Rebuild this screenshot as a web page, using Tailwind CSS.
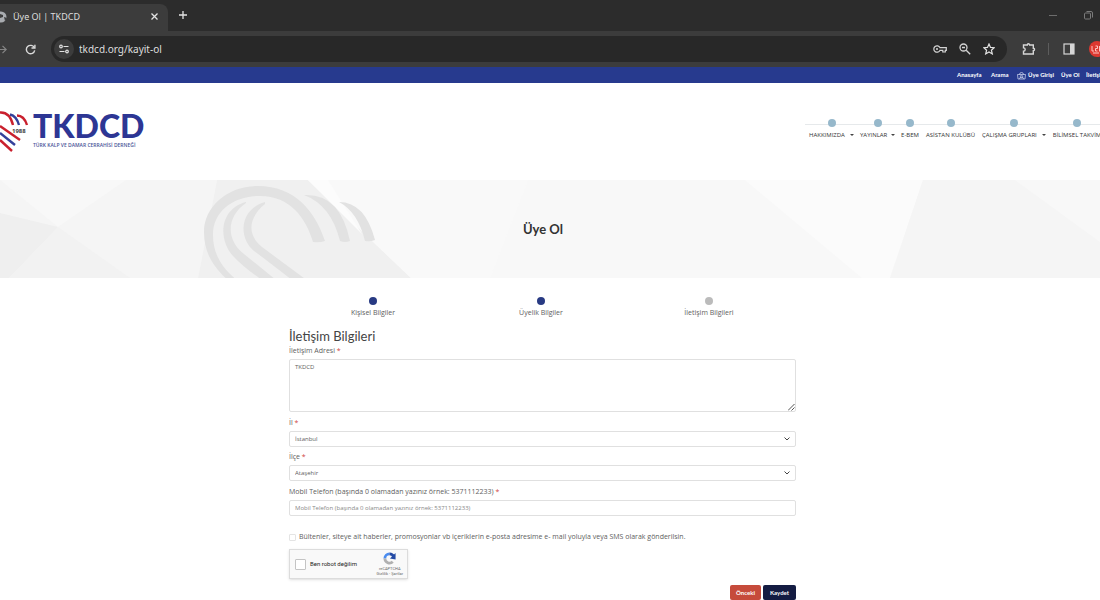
<!DOCTYPE html>
<html lang="tr">
<head>
<meta charset="utf-8">
<title>Üye Ol | TKDCD</title>
<script src="https://cdn.jsdelivr.net/npm/@tailwindcss/browser@4"></script>
</head>
<body class="h-screen overflow-hidden bg-white font-['Open_Sans',sans-serif] text-[7px] leading-[10px] text-[#606060]">

<!-- Browser window -->
<div class="bg-[#2c2c2c] font-['Noto_Sans',sans-serif] text-[#dedede]">
  <div class="flex h-[31px] items-end">
    <div class="flex h-[27px] w-[168px] items-center rounded-tr-lg bg-[#3c3c3c] pr-2 pb-[2px]">
      <svg class="h-3 w-[7px] shrink-0" viewBox="5 0 7 12"><circle cx="6" cy="6" r="5.5" fill="#a9acb0"/><path d="M5 3l3 1 0 2-3 1M9 6l3 1-2 3z" fill="#3c3c3c"/></svg>
      <span class="ml-[6px] flex-1 text-[9px] leading-3">Üye Ol | TKDCD</span>
      <button aria-label="Sekmeyi kapat" class="p-[2px]"><svg class="size-[7px]" viewBox="0 0 7 7" stroke="#e4e4e4" stroke-width="1.3"><path d="M.5.5l6 6M6.500.5l-6 6"/></svg></button>
    </div>
    <button aria-label="Yeni sekme" class="mb-3 ml-[11px]"><svg class="size-2" viewBox="0 0 8 8" stroke="#e4e4e4" stroke-width="1.3"><path d="M4 0v8M0 4h8"/></svg></button>
    <div class="mb-[11px] ml-auto flex items-center gap-[26px] pr-[7px]">
      <button aria-label="Simge durumuna küçült"><svg class="h-[9px] w-[9px]" viewBox="0 0 9 9" stroke="#6d6d6d"><path d="M0 4.500h8"/></svg></button>
      <button aria-label="Pencereyi geri yükle"><svg class="size-[9px]" viewBox="0 0 9 9" fill="none" stroke="#7b7b7b"><rect x=".5" y="2" width="6" height="6" rx="1"/><path d="M2.500.5h4.500q1.500 0 1.500 1.500v4.500"/></svg></button>
    </div>
  </div>
  <div class="flex h-9 items-center bg-[#3c3c3c]">
    <button aria-label="İleri" class="w-[7px]"><svg class="h-[9px] w-[7px]" viewBox="0 0 7 9" fill="none" stroke="#858585" stroke-width="1.200"><path d="M0 4.500h6M2.500.8l3.700 3.700-3.700 3.700"/></svg></button>
    <button aria-label="Yenile" class="ml-[18px]"><svg class="size-[11px]" viewBox="0 0 11 11" fill="none" stroke="#dadada" stroke-width="1.400"><path d="M9.300 3.600A4.200 4.200 0 1 0 9.700 6.400"/><path d="M6.500 4h3.400V.7"/></svg></button>
    <div class="ml-[15px] flex h-[26px] flex-1 items-center rounded-full bg-[#282828] pr-3 pl-[3px]">
      <button aria-label="Site bilgileri" class="flex size-5 items-center justify-center rounded-full bg-[#3c3c3c]"><svg class="size-[10px]" viewBox="0 0 10 10" fill="none" stroke="#e2e2e2" stroke-width="1.200"><circle cx="2" cy="2.500" r="1.300"/><path d="M4.500 2.500H9.500M.5 7.500h5"/><circle cx="8" cy="7.500" r="1.300"/></svg></button>
      <input aria-label="Adres" value="tkdcd.org/kayit-ol" class="ml-[5px] min-w-0 flex-1 bg-transparent text-[10px] leading-4 text-[#dedede] outline-none">
      <div class="flex items-center gap-3">
        <button aria-label="Şifreler"><svg class="h-3 w-[14px]" viewBox="0 0 14 12" fill="none" stroke="#d4d4d4" stroke-width="1.200"><path d="M6.900 4.600H13.300V7.400H12.300V9H9.800V7.400H6.900A3.200 3.200 0 1 1 6.900 4.600z"/><circle cx="4" cy="6" r="1" fill="#d4d4d4" stroke="none"/></svg></button>
        <button aria-label="Yakınlaştırma"><svg class="size-3" viewBox="0 0 12 12" fill="none" stroke="#d4d4d4" stroke-width="1.300"><circle cx="4.500" cy="4.500" r="3.500"/><path d="M7.200 7.200l4 4M3 4.500h3"/></svg></button>
        <button aria-label="Yer işareti ekle"><svg class="size-3" viewBox="0 0 12 12" fill="none" stroke="#e2e2e2" stroke-width="1.200"><path d="M6 1l1.500 3.400 3.700.3-2.800 2.500.9 3.700L6 9l-3.300 1.900.9-3.700L.8 4.700l3.700-.3z"/></svg></button>
      </div>
    </div>
    <button aria-label="Uzantılar" class="ml-[15px]"><svg class="size-[14px]" viewBox="0 0 14 14" fill="none" stroke="#d6d6d6" stroke-width="1.400"><path d="M1.500 3H5.300a1.200 1.200 0 0 1 2.400 0H11.300V6.200a1.200 1.200 0 0 1 0 2.400V12H1.500V9.300a1.700 1.700 0 0 0 0-3.400z"/></svg></button>
    <div class="ml-[12px] h-3 w-px bg-[#5d5d5d]"></div>
    <button aria-label="Yan panel" class="ml-[14px]"><svg class="size-3" viewBox="0 0 12 12"><rect x="1" y="1" width="10" height="10" fill="none" stroke="#d6d6d6" stroke-width="1.200"/><path d="M7 1h4v10H7z" fill="#d6d6d6"/></svg></button>
    <button aria-label="Profil" class="ml-[14px] w-[11px] overflow-hidden"><svg class="h-4 w-[11px]" viewBox="0 0 11 16"><circle cx="8" cy="8" r="8" fill="#dc3830"/><path d="M3 5v5h2M6.500 5h2v2.500h-2V10h2M10.500 5v5.500M4 12h6" fill="none" stroke="#ffc6c1"/></svg></button>
  </div>
</div>

<!-- Top links -->
<div class="flex h-4 justify-end overflow-hidden bg-[#273a8e]">
  <nav class="flex w-[143px] items-center gap-[6px] font-['Lato',sans-serif] text-[6px] font-bold whitespace-nowrap text-white">
    <a href="#" class="w-7 shrink-0">Anasayfa</a>
    <a href="#" class="w-5 shrink-0">Arama</a>
    <a href="#" class="flex w-[38px] shrink-0 items-center gap-[2px]"><svg class="size-[9px]" viewBox="0 0 9 9" fill="none" stroke="#d6dcf3" stroke-width=".7"><path d="M.5 3.500h8L8 8H1zM2.500 3.500a2 2 0 0 1 4 0"/><circle cx="4.500" cy="5.500" r="1.200"/><path d="M2.500 8a2 2 0 0 1 4 0"/></svg>Üye Girişi</a>
    <a href="#" class="w-[19px] shrink-0">Üye Ol</a>
    <a href="#">İletişim</a>
  </nav>
</div>

<!-- Logo and main menu -->
<header class="flex h-[97px] justify-between overflow-hidden">
  <a href="#" class="flex pt-[27px]" aria-label="TKDCD 1988">
    <svg class="h-[43px] w-[33px] shrink-0" viewBox="0 0 33 43" fill="none" stroke-width="2.400">
      <path d="M0 2.500C7 2 11 7 13 15" stroke="#c9202d"/>
      <path d="M10 4.500Q16.500 6 19 15" stroke="#33409a"/>
      <path d="M17 5.500Q24 5.500 27 15" stroke="#c9202d"/>
      <path d="M0 16l20 14" stroke="#c9202d"/>
      <path d="M0 23l15 12" stroke="#33409a"/>
      <path d="M0 30l12 11" stroke="#c9202d"/>
      <text x="12" y="23" fill="#444" stroke="none" font-size="6" font-weight="700" font-family="Open Sans, sans-serif">1988</text>
    </svg>
    <span class="flex flex-col">
      <span class="font-['Lato',sans-serif] text-[32px] leading-8 font-black text-[#2d3694]">TKDCD</span>
      <span class="text-[5px] leading-[6px] font-semibold whitespace-nowrap text-[#4a5598]">TÜRK KALP VE DAMAR CERRAHİSİ DERNEĞİ</span>
    </span>
  </a>
  <nav class="relative mt-9 flex w-[295px] gap-[6px] overflow-hidden pl-1 text-[6px] leading-[10px] whitespace-nowrap text-[#333]">
    <div class="absolute top-[5px] left-0 h-px w-full bg-[#e6e9eb]"></div>
    <a href="#" class="relative flex w-[45px] shrink-0 flex-col items-center gap-[3px]"><i class="size-2 rounded-full bg-[#96b8cb]"></i><span class="flex w-full items-center justify-between">HAKKIMIZDA<i class="border-x-2 border-t-2 border-x-transparent border-t-[#444]"></i></span></a>
    <a href="#" class="relative flex w-[35px] shrink-0 flex-col items-center gap-[3px]"><i class="size-2 rounded-full bg-[#96b8cb]"></i><span class="flex w-full items-center justify-between">YAYINLAR<i class="border-x-2 border-t-2 border-x-transparent border-t-[#444]"></i></span></a>
    <a href="#" class="relative flex w-[18px] shrink-0 flex-col items-center gap-[3px]"><i class="size-2 rounded-full bg-[#96b8cb]"></i>E-BEM</a>
    <a href="#" class="relative flex w-[51px] shrink-0 flex-col items-center gap-[3px]"><i class="size-2 rounded-full bg-[#96b8cb]"></i>ASİSTAN KULÜBÜ</a>
    <a href="#" class="relative flex w-[64px] shrink-0 flex-col items-center gap-[3px]"><i class="size-2 rounded-full bg-[#96b8cb]"></i><span class="flex w-full items-center justify-between">ÇALIŞMA GRUPLARI<i class="border-x-2 border-t-2 border-x-transparent border-t-[#444]"></i></span></a>
    <a href="#" class="relative flex w-[50px] shrink-0 flex-col items-center gap-[3px]"><i class="size-2 rounded-full bg-[#96b8cb]"></i>BİLİMSEL TAKVİM</a>
  </nav>
</header>

<!-- Page title banner -->
<section class="relative h-[98px] overflow-hidden bg-[#f8f8f8]">
  <svg class="absolute inset-0 h-full w-full" viewBox="0 0 1100 98" preserveAspectRatio="xMinYMin slice">
    <path d="M0 0h217L198 98H0z" fill="#f5f5f5"/>
    <path d="M0 0H126L58 47z" fill="#f8f8f8"/>
    <path d="M0 33L58 47 9 98H0z" fill="#efefef"/>
    <path d="M58 47L130 98H9z" fill="#f2f2f2"/>
    <path d="M217 0h91L411 98H198z" fill="#f0f0f0"/>
    <path d="M308 0h220L490 98h-79z" fill="#f9f9f9"/>
    <path d="M308 0h20l34 54z" fill="#fcfcfc"/>
    <path d="M745 0h178L890 98h-28z" fill="#fbfbfb"/>
    <path d="M923 0h177v98H890z" fill="#f5f5f5"/>
    <path d="M1015 0h85v62z" fill="#f8f8f8"/>
    <g fill="#e2e2e2">
      <path d="M313 62C306 38 290 16 260 16 234 16 213 31 213 55 213 76 224 91 242 104H232C215 89 204 75 204 52 204 27 227 6 258 6 295 6 315 31 325 61Q319 63 313 62z"/>
      <path d="M246 22C219 29 218 60 233 76Q245 89 268 104H281L244 74C225 59 227 36 246 23z"/>
      <path d="M265 22C238 30 239 59 254 71Q269 82 297 104H312L262 67C246 54 249 37 265 24z"/>
      <path d="M304 15Q340 13 350 61 345 63 340 61 331 25 304 15z"/>
      <path d="M339 22Q365 22 375 60 370 62 365 61 358 32 339 22z"/>
    </g>
  </svg>
  <h1 class="relative flex h-full items-center justify-center pr-[14px] font-['Lato',sans-serif] text-[13px] leading-5 font-bold text-[#333]">Üye Ol</h1>
</section>

<main class="pr-[15px]">
  <form class="mx-auto max-w-[507px] pt-[19px]">
    <ol class="grid grid-cols-3 pr-[3px] text-center">
      <li class="flex flex-col items-center gap-[3px]"><i class="size-2 rounded-full bg-[#283a83]"></i>Kişisel Bilgiler</li>
      <li class="flex flex-col items-center gap-[3px]"><i class="size-2 rounded-full bg-[#283a83]"></i>Üyelik Bilgiler</li>
      <li class="flex flex-col items-center gap-[3px]"><i class="size-2 rounded-full bg-[#bbb]"></i>İletişim Bilgileri</li>
    </ol>
    <h2 class="mt-[10px] font-['Lato',sans-serif] text-[13px] leading-4 text-[#444]">İletişim Bilgileri</h2>
    <label for="adres" class="mt-[2px] block">İletişim Adresi <span class="text-[#d0453f]">*</span></label>
    <div class="relative mt-[3px]">
      <textarea id="adres" class="block h-[53px] w-full resize-none rounded-[2px] border border-[#e0e0e0] px-[5px] py-[3px] text-[6px] leading-[9px] outline-none">TKDCD</textarea>
      <svg class="absolute right-[1px] bottom-[1px] size-[7px]" viewBox="0 0 7 7" stroke="#555"><path d="M0 6.500L6.500 0M3.500 6.500l3-3"/></svg>
    </div>
    <label for="il" class="mt-[6px] block">İl <span class="text-[#d0453f]">*</span></label>
    <div class="relative mt-[3px]">
      <select id="il" class="block h-4 w-full appearance-none rounded-[2px] border border-[#e0e0e0] bg-white px-[5px] text-[6px]"><option>İstanbul</option></select>
      <svg class="pointer-events-none absolute top-[6px] right-[6px] h-[4px] w-[6px]" viewBox="0 0 6 4" fill="none" stroke="#444"><path d="M.5.5L3 3 5.500.5"/></svg>
    </div>
    <label for="ilce" class="mt-[5px] block">İlçe <span class="text-[#d0453f]">*</span></label>
    <div class="relative mt-[3px]">
      <select id="ilce" class="block h-4 w-full appearance-none rounded-[2px] border border-[#e0e0e0] bg-white px-[5px] text-[6px]"><option>Ataşehir</option></select>
      <svg class="pointer-events-none absolute top-[6px] right-[6px] h-[4px] w-[6px]" viewBox="0 0 6 4" fill="none" stroke="#444"><path d="M.5.5L3 3 5.500.5"/></svg>
    </div>
    <label for="telefon" class="mt-[6px] block">Mobil Telefon (başında 0 olamadan yazınız örnek: 5371112233) <span class="text-[#d0453f]">*</span></label>
    <input id="telefon" type="tel" placeholder="Mobil Telefon (başında 0 olamadan yazınız örnek: 5371112233)" class="mt-[3px] block h-4 w-full rounded-[2px] border border-[#e0e0e0] px-[5px] text-[6px] placeholder:text-[#888]">
    <label class="mt-4 flex items-center gap-[3px]"><input type="checkbox" class="size-[7px] appearance-none rounded-[1px] border border-[#e4e4e4]"> Bültenler, siteye ait haberler, promosyonlar vb içeriklerin e-posta adresime e- mail yoluyla veya SMS olarak gönderilsin.</label>
    <div class="mt-[7px] flex h-[30px] w-[119px] items-center border border-[#dcdcdc] bg-[#f9f9f9] pr-[4px] pl-[5px] font-['Roboto',sans-serif] text-[#222] shadow-sm">
      <label class="flex flex-1 items-center gap-[4px] text-[6px] whitespace-nowrap"><input type="checkbox" class="size-[11px] appearance-none rounded-[1px] border border-[#c4c4c4] bg-white"> Ben robot değilim</label>
      <div class="flex flex-col items-center text-[4px] leading-[5px] text-[#666]">
        <svg class="mb-[1px] size-[13px]" viewBox="0 0 14 14" fill="none" stroke-width="3"><path d="M2 7a5 5 0 0 1 5-5" stroke="#4b8df0"/><path d="M7 2a5 5 0 0 1 4.500 3" stroke="#244ba5"/><path d="M13.500 1v7L7.500 7z" fill="#244ba5"/><path d="M2 7a5 5 0 0 0 8.500 3.500" stroke="#b0b0b0"/></svg>
        <span>reCAPTCHA</span><span>Gizlilik - Şartlar</span>
      </div>
    </div>
    <div class="mt-[6px] flex justify-end gap-[2px] font-['Lato',sans-serif] text-[6px] font-bold text-white">
      <button type="button" class="h-[15px] w-[31px] rounded-[2px] bg-[#c64b3b]">Önceki</button>
      <button type="submit" class="h-[15px] w-[33px] rounded-[2px] bg-[#141c42]">Kaydet</button>
    </div>
  </form>
</main>
</body>
</html>
